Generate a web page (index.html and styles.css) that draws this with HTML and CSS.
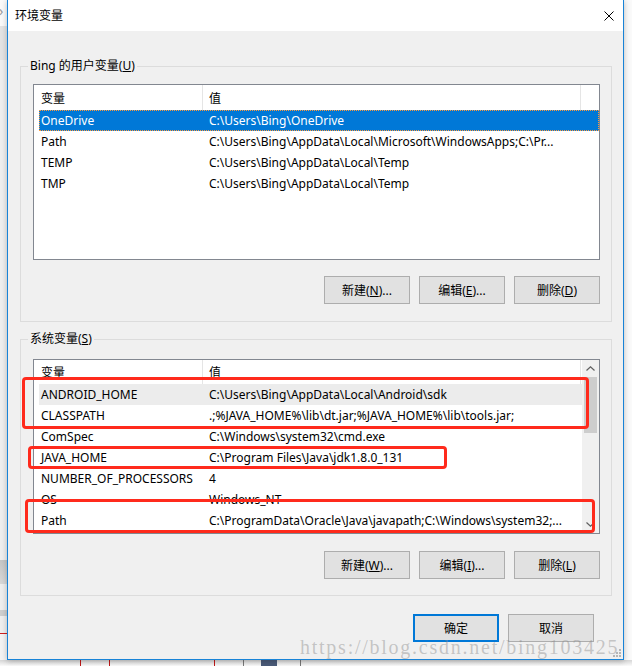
FILE: index.html
```html
<!DOCTYPE html>
<html>
<head>
  <meta charset="utf-8">
  <link rel="stylesheet" href="styles.css">
</head>
<body>
  <div class="desktop">
    <div class="backdrop-left"><span class="peek">&rsaquo;</span></div>

    <div class="window">
      <div class="titlebar">
        <span class="title">环境变量</span>
        <svg class="close" width="10" height="10" viewBox="0 0 10 10">
          <path d="M0.5 0.5 L9.5 9.5 M9.5 0.5 L0.5 9.5" stroke="#000" stroke-width="1" fill="none"/>
        </svg>
      </div>

      <div class="content">
        <!-- user variables -->
        <div class="group group-user">
          <div class="group-title">Bing 的用户变量(<u>U</u>)</div>
          <div class="list">
            <div class="list-main">
              <div class="list-head">
                <div class="head-cell">变量</div>
                <div class="head-cell">值</div>
              </div>
              <div class="row selected">
                <div class="cell">OneDrive</div>
                <div class="cell">C:\Users\Bing\OneDrive</div>
              </div>
              <div class="row">
                <div class="cell">Path</div>
                <div class="cell">C:\Users\Bing\AppData\Local\Microsoft\WindowsApps;C:\Pr...</div>
              </div>
              <div class="row">
                <div class="cell">TEMP</div>
                <div class="cell">C:\Users\Bing\AppData\Local\Temp</div>
              </div>
              <div class="row">
                <div class="cell">TMP</div>
                <div class="cell">C:\Users\Bing\AppData\Local\Temp</div>
              </div>
            </div>
          </div>
          <div class="buttons">
            <button class="btn">新建(<u>N</u>)...</button>
            <button class="btn">编辑(<u>E</u>)...</button>
            <button class="btn">删除(<u>D</u>)</button>
          </div>
        </div>

        <!-- system variables -->
        <div class="group group-system">
          <div class="group-title">系统变量(<u>S</u>)</div>
          <div class="list">
            <div class="list-main">
              <div class="list-head short">
                <div class="head-cell">变量</div>
                <div class="head-cell">值</div>
              </div>
              <div class="row inactive">
                <div class="cell">ANDROID_HOME</div>
                <div class="cell">C:\Users\Bing\AppData\Local\Android\sdk</div>
              </div>
              <div class="row">
                <div class="cell">CLASSPATH</div>
                <div class="cell">.;%JAVA_HOME%\lib\dt.jar;%JAVA_HOME%\lib\tools.jar;</div>
              </div>
              <div class="row">
                <div class="cell">ComSpec</div>
                <div class="cell">C:\Windows\system32\cmd.exe</div>
              </div>
              <div class="row">
                <div class="cell">JAVA_HOME</div>
                <div class="cell">C:\Program Files\Java\jdk1.8.0_131</div>
              </div>
              <div class="row">
                <div class="cell">NUMBER_OF_PROCESSORS</div>
                <div class="cell">4</div>
              </div>
              <div class="row">
                <div class="cell">OS</div>
                <div class="cell">Windows_NT</div>
              </div>
              <div class="row">
                <div class="cell">Path</div>
                <div class="cell">C:\ProgramData\Oracle\Java\javapath;C:\Windows\system32;...</div>
              </div>
            </div>
            <div class="scrollbar">
              <div class="arrow">
                <svg width="9" height="5" viewBox="0 0 9 5"><path d="M0.5 4.5 L4.5 0.8 L8.5 4.5" stroke="#606060" stroke-width="1.2" fill="none"/></svg>
              </div>
              <div class="thumb"></div>
              <div class="track"></div>
              <div class="arrow">
                <svg width="9" height="5" viewBox="0 0 9 5"><path d="M0.5 0.5 L4.5 4.2 L8.5 0.5" stroke="#606060" stroke-width="1.2" fill="none"/></svg>
              </div>
            </div>
          </div>
          <div class="buttons">
            <button class="btn">新建(<u>W</u>)...</button>
            <button class="btn">编辑(<u>I</u>)...</button>
            <button class="btn">删除(<u>L</u>)</button>
          </div>
        </div>

        <div class="footer">
          <button class="btn btn-default">确定</button>
          <button class="btn">取消</button>
        </div>
      </div>

      <!-- red highlight boxes drawn over the list -->
      <div class="mark mark-1"></div>
      <div class="mark mark-2"></div>
      <div class="mark mark-3"></div>

      <div class="watermark">https://blog.csdn.net/bing103425</div>
      <svg class="grip" width="8" height="8" viewBox="0 0 8 8">
        <rect x="6" y="0" width="2" height="2" fill="#b5b5b5"/>
        <rect x="3" y="3" width="2" height="2" fill="#b5b5b5"/>
        <rect x="6" y="3" width="2" height="2" fill="#b5b5b5"/>
        <rect x="0" y="6" width="2" height="2" fill="#b5b5b5"/>
        <rect x="3" y="6" width="2" height="2" fill="#b5b5b5"/>
        <rect x="6" y="6" width="2" height="2" fill="#b5b5b5"/>
      </svg>
    </div>

    <div class="backdrop-right"></div>
  </div>
  <div class="ground"></div>
</body>
</html>
```

FILE: styles.css
```css
* {
  box-sizing: border-box;
}

body {
  margin: 0;
  width: 632px;
  height: 666px;
  overflow: hidden;
  background: #fff;
  font-family: "Noto Sans", "Noto Sans CJK SC", sans-serif;
  font-size: 12px;
  color: #000;
}

.desktop {
  display: flex;
  height: 660px;
}

.backdrop-left {
  width: 7px;
  background: linear-gradient(to bottom, #fafafa 0, #fafafa 26px, #e4e4e4 26px, #e4e4e4 60px, #efefef 60px, #efefef 560px, #c6c6c6 560px, #d8d8d8 584px, #efefef 584px, #efefef 610px, #cfcfcf 610px, #cfcfcf 616px, #efefef 616px, #efefef 633px, #d02020 633px, #d02020 634px, #f4f4f4 634px);
  overflow: hidden;
}

.peek {
  display: block;
  color: #9a9a9a;
  font-size: 14px;
  line-height: 14px;
  margin: 4px 0 0 -1px;
}

.backdrop-right {
  width: 8px;
  background: #fafafa;
}

.window {
  position: relative;
  width: 617px;
  border: 1px solid #1883d7;
  border-top: 0;
  background: #f0f0f0;
  box-shadow: 0 1px 6px rgba(0, 0, 0, 0.25);
}

.titlebar {
  height: 31px;
  background: #fff;
  display: flex;
  align-items: center;
  justify-content: space-between;
  padding: 0 9px 0 7px;
}

.title {
  line-height: 16px;
}

.content {
  padding: 35px 11px 0 12px;
}

.group {
  position: relative;
  border: 1px solid #dcdcdc;
  padding: 17px 11px 17px 12px;
}

.group-system {
  margin-top: 17px;
  padding-top: 19px;
  padding-bottom: 16px;
}

.group-title {
  position: absolute;
  top: -9px;
  left: 7px;
  padding: 0 2px;
  background: #f0f0f0;
  line-height: 16px;
}

.list {
  display: flex;
  height: 176px;
  border: 1px solid #828790;
  background: #fff;
}

.group-system .list {
  height: 175px;
}

.list-main {
  flex: 1;
  overflow: hidden;
}

.list-head {
  display: grid;
  grid-template-columns: 169px 378px;
  height: 25px;
}

.list-head.short {
  height: 24px;
}

.head-cell {
  display: flex;
  align-items: center;
  padding-left: 6px;
  border-right: 1px solid #e5e5e5;
}

.head-cell:first-child {
  padding-left: 7px;
}

.row {
  display: grid;
  grid-template-columns: 163px 378px;
  height: 21px;
  margin-left: 5px;
  align-items: center;
}

.cell {
  padding-left: 2px;
  white-space: nowrap;
  overflow: hidden;
  line-height: 16px;
}

.cell + .cell {
  padding-left: 7px;
}

.row.selected {
  background: #0078d7;
  color: #fff;
  outline: 1px dotted #ff9a3c;
  outline-offset: -1px;
}

.row.inactive {
  background: #ececec;
}

.scrollbar {
  width: 17px;
  display: flex;
  flex-direction: column;
  background: #f0f0f0;
}

.arrow {
  height: 17px;
  display: flex;
  align-items: center;
  justify-content: center;
}

.thumb {
  height: 56px;
  margin: 0 2px;
  background: #cdcdcd;
}

.track {
  flex: 1;
}

.buttons {
  display: flex;
  justify-content: flex-end;
  gap: 9px;
  margin-top: 16px;
}

.group-system .buttons {
  margin-top: 17px;
}

.btn {
  width: 86px;
  height: 28px;
  padding: 0;
  background: #e1e1e1;
  border: 1px solid #adadad;
  font: inherit;
  color: #000;
}

.btn-default {
  border: 2px solid #0078d7;
}

.footer {
  display: flex;
  justify-content: flex-end;
  gap: 9px;
  margin-top: 18px;
  padding-right: 18px;
}

.mark {
  position: absolute;
  border: 3px solid #ff2a1c;
  border-radius: 4px;
}

.mark-1 {
  left: 14px;
  top: 377px;
  width: 567px;
  height: 52px;
}

.mark-2 {
  left: 20px;
  top: 446px;
  width: 419px;
  height: 23px;
}

.mark-3 {
  left: 17px;
  top: 499px;
  width: 570px;
  height: 34px;
}

.watermark {
  position: absolute;
  left: 292px;
  top: 639px;
  font-family: "Liberation Serif", serif;
  font-size: 20px;
  line-height: 16px;
  letter-spacing: 1.75px;
  color: rgba(140, 140, 140, 0.45);
  white-space: nowrap;
}

.grip {
  position: absolute;
  right: 2px;
  bottom: 2px;
}

.ground {
  height: 6px;
  background:
    linear-gradient(to right, transparent 80px, #c01818 80px, #c01818 81px, transparent 81px),
    linear-gradient(to right, transparent 109px, #c01818 109px, #c01818 110px, transparent 110px),
    linear-gradient(to right, transparent 214px, #c01818 214px, #c01818 215px, transparent 215px),
    linear-gradient(to right, transparent 243px, #777 243px, #777 244px, transparent 244px),
    linear-gradient(to right, transparent 261px, #4a5a78 261px, #4a5a78 277px, transparent 277px),
    linear-gradient(to right, transparent 300px, #777 300px, #777 301px, transparent 301px),
    linear-gradient(to bottom, #d6d6d6, #fbfbfb);
}
```
